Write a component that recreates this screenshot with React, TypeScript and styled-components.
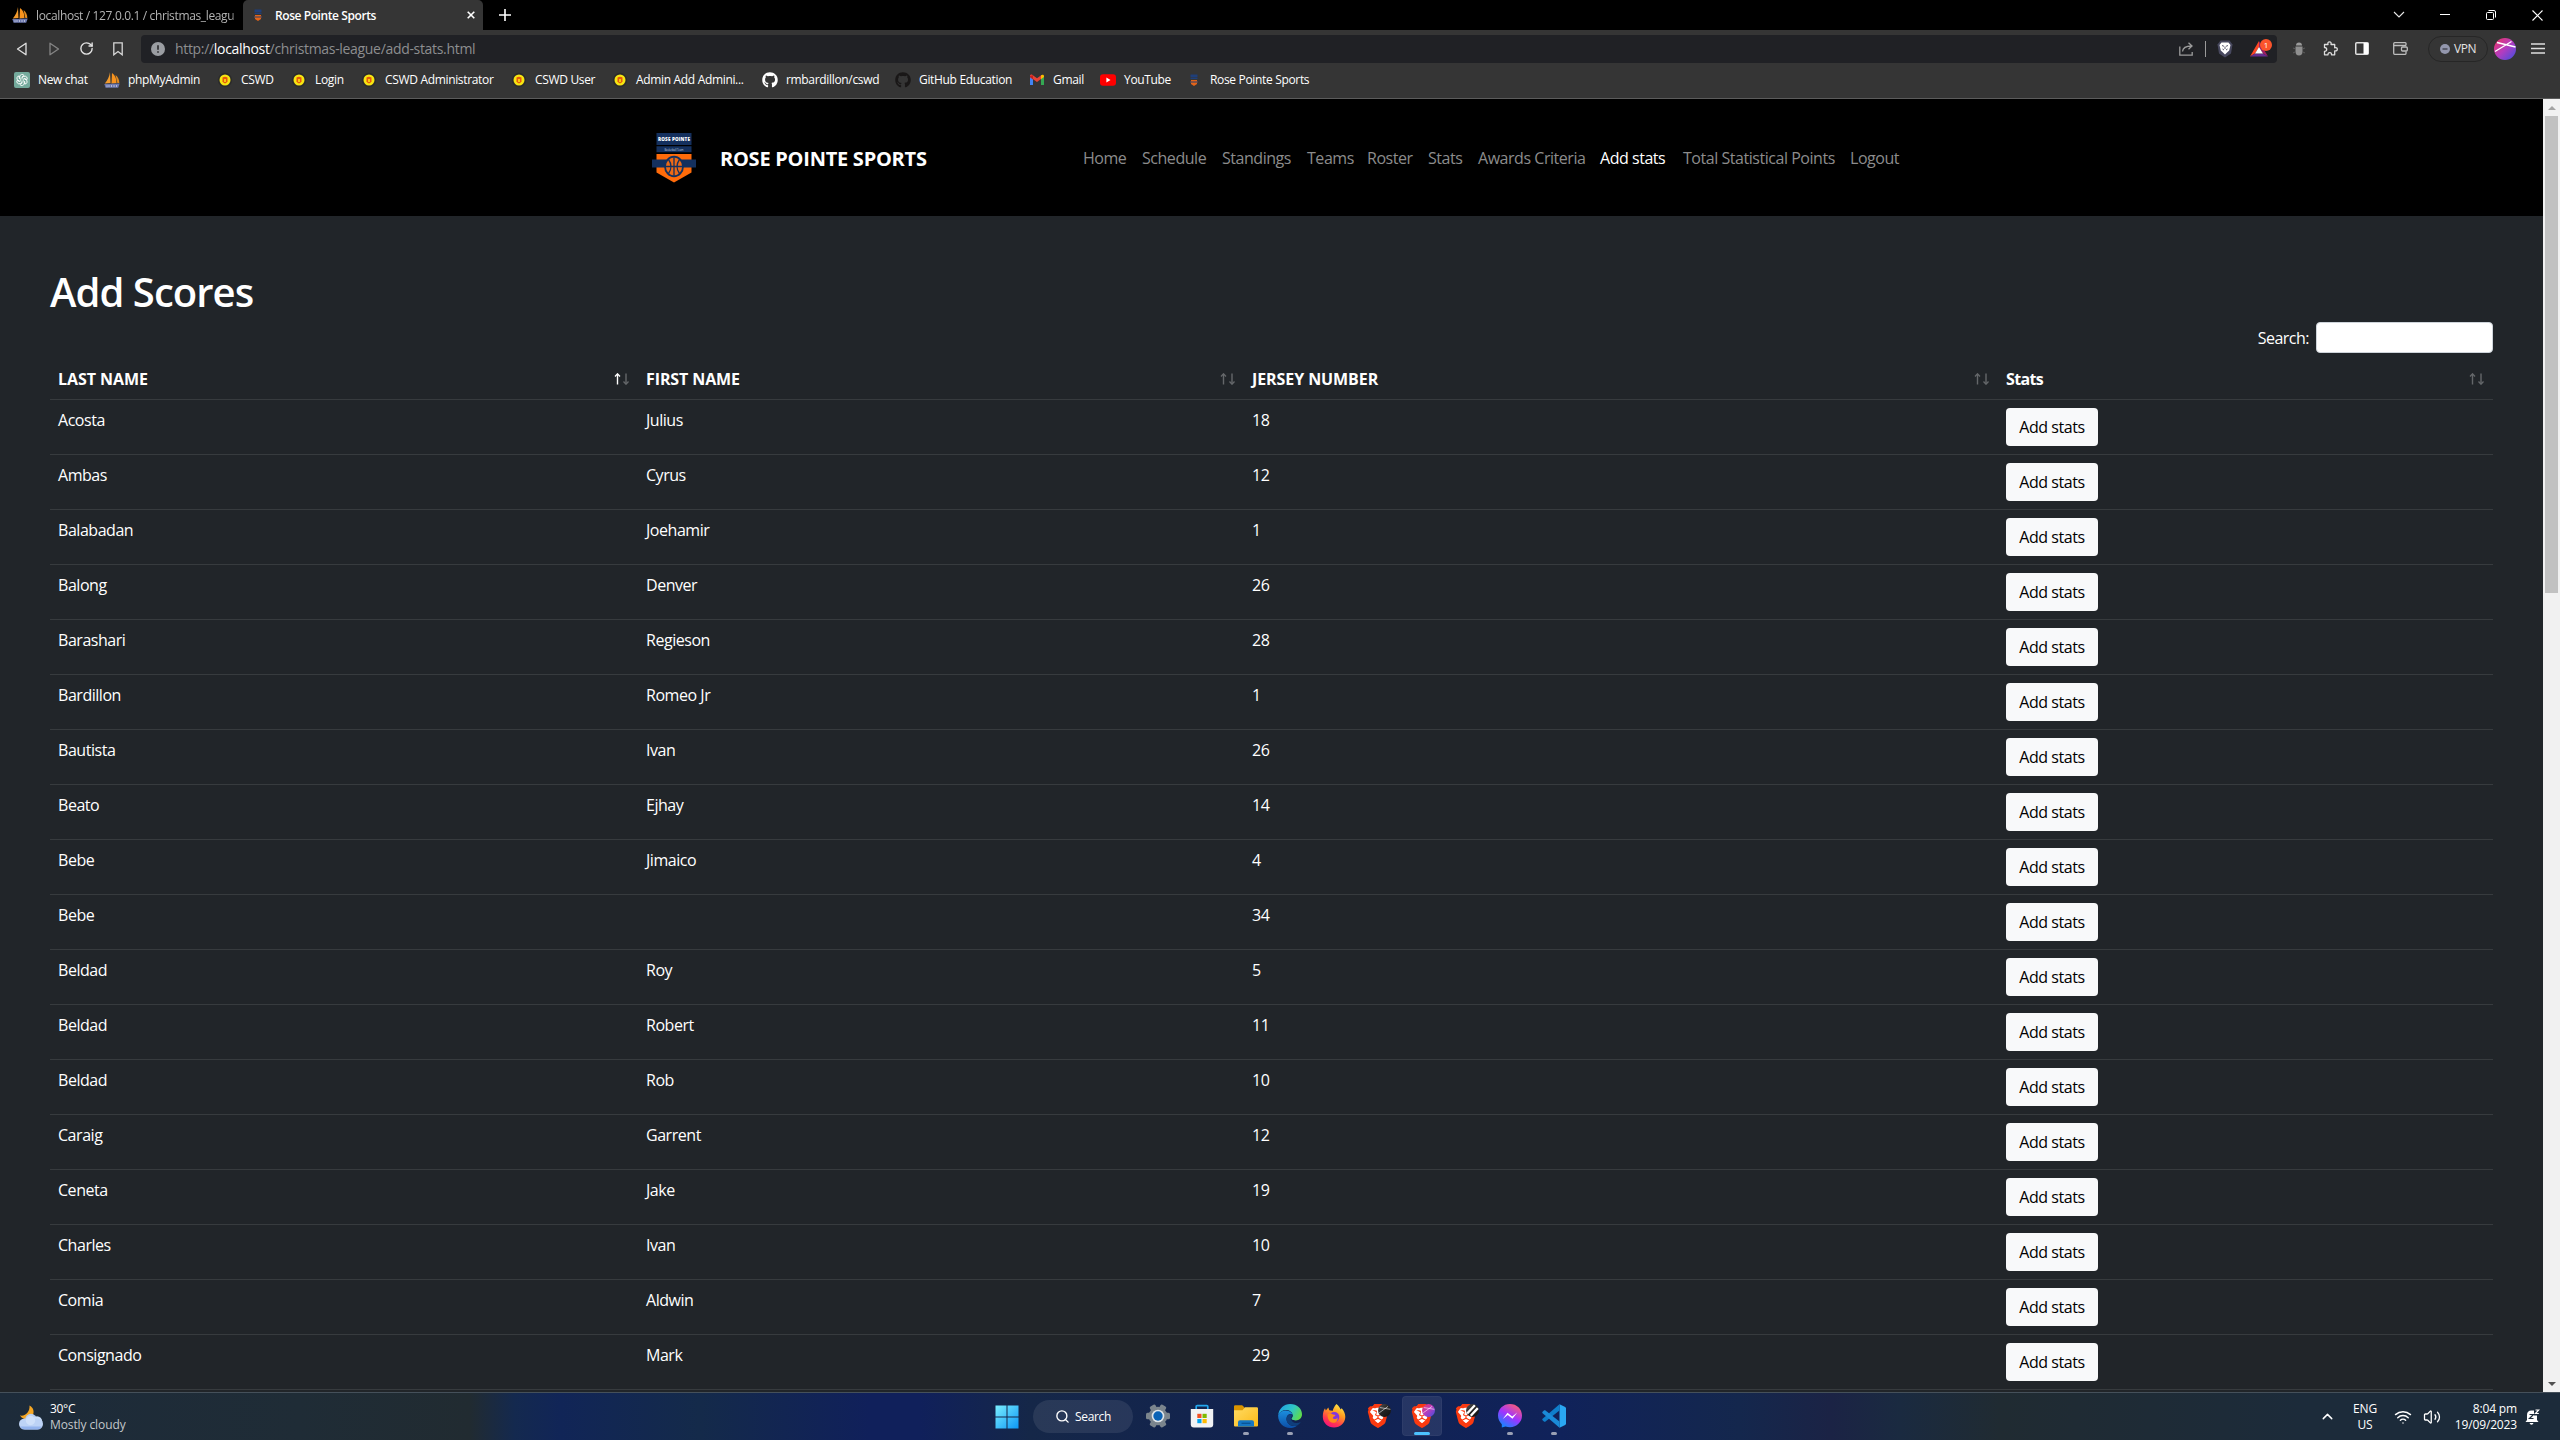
import React from "react";
import styled, { createGlobalStyle } from "styled-components";
import { Puzzle, Wallet, Search, Wifi, Volume2, RotateCw, ChevronUp } from "lucide-react";
import { FaGithub } from "react-icons/fa";
import { SiBrave } from "react-icons/si";

const Global = createGlobalStyle`
  * { box-sizing: border-box; }
  html, body { margin: 0; padding: 0; background: #212529; overflow: hidden; }
  body { font-family: "Open Sans", "Noto Sans", "Liberation Sans", sans-serif; color: #fff; }
`;

const Screen = styled.div`
  width: 2560px;
  height: 1440px;
  display: flex;
  flex-direction: column;
  overflow: hidden;
`;

/* ---------- browser chrome ---------- */

const TabStrip = styled.div`
  height: 30px;
  flex: none;
  background: #000;
  display: flex;
  font-size: 12px;
`;
const Tab = styled.div<{ $active?: boolean }>`
  width: ${(p) => (p.$active ? 240 : 243)}px;
  height: 30px;
  display: flex;
  align-items: center;
  padding: ${(p) => (p.$active ? "0 5px 0 7px" : "0 1px 0 12px")};
  background: ${(p) => (p.$active ? "#353535" : "#000")};
  border-radius: ${(p) => (p.$active ? "5px 5px 0 0" : "0")};
`;
const TabTitle = styled.span<{ $active?: boolean }>`
  flex: 1;
  margin-left: ${(p) => (p.$active ? 9 : 8)}px;
  white-space: nowrap;
  font-weight: ${(p) => (p.$active ? 600 : 400)};
  letter-spacing: ${(p) => (p.$active ? "-0.42px" : "-0.36px")};
  color: ${(p) => (p.$active ? "#fff" : "#b4b4b4")};
  ${(p) => (p.$active ? "" : "mask-image: linear-gradient(to right, #000 94%, transparent);")}
`;
const Slot = styled.span<{ $w: number }>`
  width: ${(p) => p.$w}px;
  flex: none;
  display: flex;
  align-items: center;
  justify-content: center;
`;
const Spacer = styled.div`
  flex: 1;
`;

const Toolbar = styled.div`
  height: 37px;
  flex: none;
  background: #353535;
  display: flex;
  align-items: center;
  padding: 0 6px 0 5px;
  color: #d6d6d6;
`;
const UrlBar = styled.div`
  margin-left: 7px;
  width: 2136px;
  height: 28px;
  background: #202125;
  border-radius: 4px;
  display: flex;
  align-items: center;
`;
const UrlText = styled.span`
  font-size: 14px;
  letter-spacing: -0.32px;
  color: #8d8e90;
  line-height: 28px;
  b {
    font-weight: 400;
    color: #fff;
  }
`;
const Divider = styled.i`
  width: 1px;
  height: 16px;
  margin: 0 3px;
  background: #9a9a9a;
`;
const BadgeHost = styled.span`
  position: relative;
  display: flex;
`;
const Badge = styled.span`
  position: absolute;
  left: 10px;
  top: -2px;
  width: 12px;
  height: 12px;
  border-radius: 6px;
  background: #fb542b;
  color: #fff;
  font-size: 8px;
  line-height: 12px;
  text-align: center;
`;
const Vpn = styled.div`
  margin-left: 12px;
  width: 60px;
  height: 26px;
  border: 1px solid #262626;
  border-radius: 13px;
  display: flex;
  align-items: center;
  justify-content: center;
  gap: 4px;
  font-size: 12px;
  letter-spacing: -0.45px;
  color: #e4e4e4;
`;

const Bookmarks = styled.div`
  height: 32px;
  flex: none;
  background: #353535;
  border-bottom: 1px solid #5c5c5c;
  padding: 0 0 6px 14px;
  display: flex;
  align-items: center;
  gap: 16px;
  font-size: 12px;
  letter-spacing: -0.33px;
`;
const Mark = styled.div`
  display: flex;
  align-items: center;
  gap: 8px;
`;
const MarkText = styled.span<{ $w: number }>`
  width: ${(p) => p.$w}px;
  white-space: nowrap;
  line-height: 16px;
`;

/* ---------- page ---------- */

const Viewport = styled.div`
  height: 1293px;
  flex: none;
  display: flex;
  overflow: hidden;
`;
const Page = styled.main`
  width: 2543px;
  height: 1293px;
  overflow: hidden;
  background: #212529;
`;
const Navbar = styled.nav`
  height: 117px;
  background: #000;
  display: flex;
  align-items: center;
  padding-left: 651px;
`;
const Brand = styled.span`
  margin-left: 23px;
  width: 363px;
  padding-top: 1px;
  font-size: 20px;
  font-weight: 700;
  letter-spacing: -0.25px;
`;
const NavLink = styled.a<{ $w: number; $active?: boolean }>`
  width: ${(p) => p.$w}px;
  margin-right: 16px;
  padding-top: 1px;
  white-space: nowrap;
  font-size: 16px;
  line-height: 24px;
  letter-spacing: -0.46px;
  color: ${(p) => (p.$active ? "#fff" : "#8c8c8c")};
`;
const Content = styled.section`
  padding: 52px 50px 0;
`;
const Title = styled.h1`
  margin: 0;
  font-size: 40px;
  line-height: 48px;
  font-weight: 600;
  letter-spacing: -0.95px;
`;
const Filter = styled.label`
  display: flex;
  justify-content: flex-end;
  align-items: center;
  gap: 7px;
  margin-top: 6px;
  height: 31px;
  font-size: 16px;
  letter-spacing: -0.5px;
`;
const FilterInput = styled.input`
  width: 177px;
  height: 31px;
  border: 1px solid #ced4da;
  border-radius: 4px;
  background: #fff;
`;
const Table = styled.table`
  margin-top: 6px;
  width: 2443px;
  table-layout: fixed;
  border-collapse: separate;
  border-spacing: 0;
  font-size: 16px;
  line-height: 24px;
  letter-spacing: -0.46px;
`;
const Th = styled.th<{ $w?: number }>`
  ${(p) => (p.$w ? `width: ${p.$w}px;` : "")}
  height: 41px;
  padding: 8px 7px 8px 8px;
  text-align: left;
  font-weight: 700;
  border-bottom: 1px solid #373b3e;
`;
const ThInner = styled.div<{ $ls: number }>`
  display: flex;
  align-items: center;
  justify-content: space-between;
  letter-spacing: ${(p) => p.$ls}px;
`;
const Td = styled.td`
  height: 55px;
  padding: 8px;
  vertical-align: top;
  border-bottom: 1px solid #373b3e;
`;
const AddButton = styled.button`
  display: block;
  width: 92px;
  height: 38px;
  padding: 0;
  border: 0;
  border-radius: 4px;
  background: #f8f9fa;
  color: #000;
  font-family: inherit;
  font-size: 16px;
  letter-spacing: -0.42px;
`;
const Scrollbar = styled.div`
  width: 17px;
  background: #f1f1f1;
  display: flex;
  flex-direction: column;
  align-items: center;
`;
const Arrow = styled.span<{ $up?: boolean }>`
  height: 17px;
  width: 17px;
  display: flex;
  align-items: center;
  justify-content: center;
  &::before {
    content: "";
    border: 4px solid transparent;
    border-top-width: ${(p) => (p.$up ? 0 : 4)}px;
    border-bottom-width: ${(p) => (p.$up ? 4 : 0)}px;
    ${(p) => (p.$up ? "border-bottom-color: #a3a3a3;" : "border-top-color: #505050;")}
  }
`;
const Thumb = styled.div`
  width: 13px;
  height: 477px;
  background: #c1c1c1;
  margin-bottom: auto;
`;

/* ---------- taskbar ---------- */

const Taskbar = styled.footer`
  height: 48px;
  flex: none;
  border-top: 1px solid #45505a;
  background: linear-gradient(
    to right,
    #1d2b3a 0, #1f2c36 300px, #212b31 470px, #14294f 515px, #112557 560px,
    #142a4a 700px, #10205b 870px, #10205b 920px, #152748 1030px, #12234f 1250px,
    #10225a 1560px, #14274d 1740px, #1b2345 1830px, #1a2a40 1900px, #202b32 2000px, #1c2b3a 2300px
  );
  display: flex;
  align-items: center;
  color: #fff;
`;
const Weather = styled.div`
  width: 995px;
  padding-left: 18px;
  display: flex;
  align-items: center;
  gap: 6px;
`;
const WeatherText = styled.div`
  font-size: 12px;
  line-height: 16px;
  letter-spacing: -0.3px;
  span {
    display: block;
    letter-spacing: -0.1px;
    color: #c3c7ca;
  }
`;
const SearchPill = styled.div`
  width: 100px;
  height: 33px;
  margin: 0 3px 0 14px;
  border-radius: 17px;
  background: rgba(255, 255, 255, 0.085);
  display: flex;
  align-items: center;
  justify-content: center;
  gap: 5px;
  font-size: 12px;
  letter-spacing: -0.35px;
`;
const AppSlot = styled.div`
  width: 44px;
  height: 47px;
  display: flex;
  flex-direction: column;
  align-items: center;
`;
const Tile = styled.div<{ $state?: "open" | "active" }>`
  width: 40px;
  height: 40px;
  margin-top: 3px;
  padding-top: 8px;
  border-radius: 4px;
  display: flex;
  flex-direction: column;
  align-items: center;
  background: ${(p) => (p.$state === "active" ? "rgba(255,255,255,0.09)" : "transparent")};
  box-shadow: ${(p) => (p.$state === "active" ? "inset 0 0 0 1px rgba(255,255,255,0.04)" : "none")};
  &::after {
    content: "";
    margin-top: 4px;
    height: 3px;
    border-radius: 2px;
    width: ${(p) => (p.$state === "active" ? 16 : p.$state ? 6 : 0)}px;
    background: ${(p) => (p.$state === "active" ? "#4cc2ff" : "#9aa0b4")};
  }
`;
const Tray = styled.div`
  display: flex;
  align-items: center;
  font-size: 12px;
  line-height: 16px;
  height: 47px;
`;
const TrayText = styled.div<{ $w: number; $align: string }>`
  width: ${(p) => p.$w}px;
  text-align: ${(p) => p.$align};
  letter-spacing: -0.15px;
`;
const BraveWrap = styled.span`
  display: flex;
  position: relative;
`;
const ProfileDot = styled.svg`
  position: absolute;
  right: -1px;
  top: 0;
`;

/* ---------- drawings ---------- */

const PmaIcon = () => (
  <svg width="16" height="16" viewBox="0 0 16 16">
    <path d="M6 0C5.500 4.500 3.500 8.500 .8 11.500L6.500 11Z" fill="#f29b2e" />
    <path d="M8 1c3 2 4.500 5.500 4.500 10L7.500 11.500Z" fill="#f7931e" />
    <path d="M11.500 3c2.500 2 3.800 4.500 3.800 8h-2Z" fill="#e08a20" />
    <path d="M.3 12l15.400-.5-1.500 4.200H1.600Z" fill="#6c78af" />
    <path d="M3 13.200v2M5 13v2M7.500 13v2M10 13v2M12.500 13v2" stroke="#c5c9dc" strokeWidth=".8" />
  </svg>
);
const CrestIcon = () => (
  <svg width="16" height="16" viewBox="0 0 16 16">
    <path d="M4.500 2.500h7v3h-7zM4.500 6h7v1h-7z" fill="#1f3f7a" />
    <path d="M5 8h6v4l-3 2-3-2Z" fill="#e3641a" />
    <path d="M4 9.300h8v1.400H4z" fill="#5b4a55" />
  </svg>
);
const SealIcon = () => (
  <svg width="16" height="16" viewBox="0 0 16 16">
    <circle cx="8" cy="8" r="7.200" fill="#2b2b2b" />
    <circle cx="8" cy="8" r="5.500" fill="#f6e511" />
    <path d="M5.500 5.600q2.500-1.800 5 0v3.600q-.4 1.600-2.500 2.200-2.100-.6-2.500-2.200Z" fill="#e8590c" />
    <path d="M7 7h2v3H7z" fill="#f6c90e" />
  </svg>
);
const ChatIcon = () => (
  <svg width="16" height="16" viewBox="0 0 16 16">
    <rect width="16" height="16" rx="2" fill="#74aa9c" />
    <g fill="none" stroke="#fff" strokeWidth=".85">
      {[0, 60, 120, 180, 240, 300].map((a) => (
        <path key={a} transform={`rotate(${a} 8 8)`} d="M5.800 6.800V4.700a2.300 2.300 0 0 1 4.300-1.100L8 4.900v2.200" />
      ))}
    </g>
  </svg>
);
const GmailIcon = () => (
  <svg width="16" height="16" viewBox="0 0 16 16">
    <path d="M1 4v9h3V7Z" fill="#4285f4" />
    <path d="M12 7v6h3V4Z" fill="#34a853" />
    <path d="M1 4.500V4c0-1.500 1.500-1.900 2.500-1.100L8 6.300l4.500-3.400L12 7 8 10 1 5Z" fill="#ea4335" />
    <path d="M12 3.300c1.200-1 3-.6 3 .9v.8l-3 2.300Z" fill="#fbbc04" />
    <path d="M1 4v1.200l3 2.200V3.300Z" fill="#c5221f" />
  </svg>
);
const YoutubeIcon = () => (
  <svg width="16" height="16" viewBox="0 0 16 16">
    <rect y="2.300" width="16" height="11.400" rx="3" fill="#f00" />
    <path d="M6.400 5.600v4.800L10.500 8Z" fill="#fff" />
  </svg>
);

const TeamLogo = () => (
  <svg width="46" height="50" viewBox="0 0 46 50">
    <path d="M5.500 0h35v12h-35zM5.500 13.300h35v6h-35z" fill="#14305e" />
    <text x="23" y="8.100" fill="#fff" fontSize="4.600" fontWeight="800" textAnchor="middle" textLength="32">ROSE POINTE</text>
    <text x="23" y="17.500" fill="#b9c4d8" fontSize="2.600" textAnchor="middle" textLength="19">Basketball Team</text>
    <path d="M5.500 21h35v18.500L23 49.500 5.500 39.500Z" fill="#ff6b0a" />
    <path d="M1 26.500h44v8H1z" fill="#14305e" />
    <ellipse cx="23" cy="33.500" rx="9" ry="9.800" fill="#ee6a16" stroke="#14305e" strokeWidth="1.800" />
    <path d="M23 24v19M14 33.500h18M17.500 26.500q5 7 0 14M28.500 26.500q-5 7 0 14" fill="none" stroke="#14305e" strokeWidth="1.300" />
  </svg>
);

const SortArrows = ({ sorted }: { sorted?: boolean }) => (
  <svg width="18" height="12" viewBox="0 0 18 12" fill="none" stroke="#fff">
    <g opacity={sorted ? 1 : 0.3}>
      <path d="M4.500 11.500V1" strokeWidth="1.400" />
      <path d="M2 3.500L4.500.8 7 3.500" strokeWidth="1.300" />
    </g>
    <g opacity=".3">
      <path d="M13 .5V11" strokeWidth="1.400" />
      <path d="M10.500 8.500l2.500 2.700 2.500-2.700" strokeWidth="1.300" />
    </g>
  </svg>
);

const profileGradient = (id: string, dark?: boolean) => (
  <linearGradient id={id} x1="0" y1="0" x2="1" y2="1">
    <stop offset="0" stopColor={dark ? "#555" : "#f0355f"} />
    <stop offset=".5" stopColor={dark ? "#222" : "#b43cc0"} />
    <stop offset="1" stopColor={dark ? "#111" : "#3b50e0"} />
  </linearGradient>
);

const Avatar = () => (
  <svg width="22" height="22" viewBox="0 0 22 22">
    <defs>{profileGradient("av")}</defs>
    <circle cx="11" cy="11" r="11" fill="url(#av)" />
    <path d="M3 4.500L21.500 9M1 13.500L17.500 3.500" stroke="#fff" strokeWidth="1.300" />
  </svg>
);

const BraveIcon = ({ kind }: { kind: "dark" | "pink" | "stripe" }) => (
  <BraveWrap>
    <svg width="24" height="24" viewBox="0 0 24 24">
      <path d="M7 2h10l4 5-2.500 10L12 22l-6.500-5L3 7Z" fill="#fff" />
      <SiBrave size={24} color="#fa3a10" />
    </svg>
    <ProfileDot width="13" height="13" viewBox="0 0 22 22">
      <defs>{profileGradient("bd" + kind, kind !== "pink")}</defs>
      <circle cx="11" cy="11" r="11" fill={`url(#bd${kind})`} />
      {kind === "stripe" ? (
        <path d="M2 16L15 2M8 20L20 7" stroke="#fff" strokeWidth="4" />
      ) : (
        <path d="M3 6l18 3M2 15L17 4" stroke="#fff" strokeOpacity=".75" strokeWidth="1.300" />
      )}
    </ProfileDot>
  </BraveWrap>
);

const StartIcon = () => (
  <svg width="24" height="24" viewBox="0 0 24 24">
    <defs>
      <linearGradient id="win" gradientUnits="userSpaceOnUse" x1="0" y1="0" x2="24" y2="24">
        <stop offset="0" stopColor="#7df0ff" />
        <stop offset="1" stopColor="#0a95f5" />
      </linearGradient>
    </defs>
    <path d="M.5.500H11.500V11.500H.5ZM12.500.500H23.500V11.500H12.500ZM.5 12.500H11.500V23.500H.5ZM12.500 12.500H23.500V23.500H12.500Z" fill="url(#win)" />
  </svg>
);
const SettingsIcon = () => (
  <svg width="24" height="24" viewBox="0 0 24 24">
    <g fill="#7b858d">
      {[0, 60, 120].map((a) => (
        <rect key={a} x="8.800" y="0" width="6.400" height="24" rx="1.500" transform={`rotate(${a + 30} 12 12)`} />
      ))}
      <circle cx="12" cy="12" r="9.300" />
    </g>
    <circle cx="12" cy="12" r="6.300" fill="#dfe5ea" />
    <circle cx="12" cy="12" r="4.700" fill="#0b63b5" />
  </svg>
);
const StoreIcon = () => (
  <svg width="24" height="24" viewBox="0 0 24 24">
    <path d="M6.200 6V2.600q0-1 1-1h9.600q1 0 1 1V6" fill="none" stroke="#23a8ee" strokeWidth="1.700" />
    <path d="M.8 5h22.400v15.500q0 3-3 3H3.800q-3 0-3-3Z" fill="#f1f2f4" />
    <path d="M7.300 9.800h4.200V14H7.300z" fill="#f25022" />
    <path d="M12.500 9.800h4.200V14h-4.200z" fill="#7fba00" />
    <path d="M7.300 15h4.200v4.200H7.300z" fill="#00a4ef" />
    <path d="M12.500 15h4.200v4.200h-4.200z" fill="#ffb900" />
  </svg>
);
const FolderIcon = () => (
  <svg width="24" height="24" viewBox="0 0 24 24">
    <defs>
      <linearGradient id="fo" x1="0" y1="0" x2="1" y2="1">
        <stop offset="0" stopColor="#ffdb63" />
        <stop offset="1" stopColor="#fbb917" />
      </linearGradient>
    </defs>
    <path d="M0 2.500q0-1.200 1.200-1.200h7l2.300 2.200V8H0Z" fill="#d99400" />
    <path d="M0 6.200h8.500L11 3.300h11.800q1.200 0 1.200 1.200v17q0 1-1 1H1q-1 0-1-1Z" fill="url(#fo)" />
    <path d="M4 22.500v-4.300q0-2 2-2h12q2 0 2 2v4.300Z" fill="#1577c4" />
    <path d="M7.500 19.300h9" stroke="#0a5495" strokeWidth="1.300" />
  </svg>
);
const EdgeIcon = () => (
  <svg width="24" height="24" viewBox="0 0 24 24">
    <defs>
      <linearGradient id="eg" x1="0" y1=".2" x2="1" y2=".6">
        <stop offset="0" stopColor="#1f9fe6" />
        <stop offset=".55" stopColor="#2fc6c6" />
        <stop offset="1" stopColor="#5fdc4b" />
      </linearGradient>
      <linearGradient id="eb" x1="0" y1="0" x2="0" y2="1">
        <stop offset="0" stopColor="#1b8fdf" />
        <stop offset="1" stopColor="#0c4ea6" />
      </linearGradient>
    </defs>
    <path d="M.2 11C1 4.500 6 0 12.200 0 19 0 24 4.600 24 10.200c0 3.900-3 6.200-6.200 6.200-3.600 0-4.700-1.500-4-2.400 1-1.200 1.200-1.800 1-3C14.200 8 11.500 6 8 6 4.500 6 1.500 8 .2 11Z" fill="url(#eg)" />
    <path d="M.2 11C1.500 8 4.500 6.500 7.500 6.500c3.800 0 6.500 1.800 7.200 4.200C12 8.500 8 11 8.500 15.500c.5 4.500 5 8 10.700 5.900C17 23.200 14.500 24 12 24 5 24-.4 18 .2 11Z" fill="url(#eb)" />
    <path d="M8.500 15c-.2 4.500 5 8.500 10.700 6.400 1.500-.8 2.800-2 3.500-3.400-4 2-9.200 1-9.900-3.500.3-1.200 1.500-2 1-3.800-2-1.200-5.100 1-5.300 4.300Z" fill="#103f7c" />
  </svg>
);
const FirefoxIcon = () => (
  <svg width="24" height="24" viewBox="0 0 24 24">
    <defs>
      <linearGradient id="ff" x1=".8" y1="0" x2=".3" y2="1">
        <stop offset="0" stopColor="#fff04a" />
        <stop offset=".4" stopColor="#ff9a1f" />
        <stop offset=".75" stopColor="#ff3750" />
        <stop offset="1" stopColor="#f3117e" />
      </linearGradient>
    </defs>
    <path d="M14.500 0c2.500 2 3.500 4 4 5.500l1.200-1.200C22 7 23.400 10 23.300 13c-.2 6-5 10.500-11.200 10.500C5.800 23.500.8 19 .8 12.800.8 9.500 1.500 6 3 4.200l.8 2.200L6.300 3.600l1 2.700C9 6.500 9.500 6.800 10.500 7c1-3 2-5 4-7Z" fill="url(#ff)" />
    <circle cx="12.300" cy="13" r="5" fill="#8436dd" />
    <path d="M5.500 10.500c2-1.500 4-1.200 5.500 0l2.500.5c-.5 1.500-2.500 1.500-2.700 3 .7 1.600 3.700 1.500 4.700-.5.500 3-1.500 5.500-4.500 5.300-3.500-.3-5.500-4-5.500-8.300Z" fill="#ff8a1c" />
  </svg>
);
const MessengerIcon = () => (
  <svg width="24" height="24" viewBox="0 0 24 24">
    <defs>
      <linearGradient id="ms" x1=".2" y1="1" x2=".8" y2="0">
        <stop offset="0" stopColor="#0a8cff" />
        <stop offset=".5" stopColor="#a033ff" />
        <stop offset="1" stopColor="#ff6070" />
      </linearGradient>
    </defs>
    <path d="M12 0C5.300 0 0 4.900 0 11.600c0 3.500 1.400 6.500 3.800 8.600v3.400l3.700-1.100c1.400.5 2.900.7 4.500.7 6.700 0 12-4.900 12-11.600S18.700 0 12 0Z" fill="url(#ms)" />
    <path d="M4.800 15l4.700-6.200 4.700 3.600 5-3.900-4.700 6.200-4.700-3.600Z" fill="#fff" />
  </svg>
);
const CodeIcon = () => (
  <svg width="24" height="24" viewBox="0 0 24 24">
    <path d="M17.500.3L23.200 3 24 4v16l-.8 1-5.700 2.700Z" fill="#2aa7f2" />
    <path d="M17.500.3V6.500L3.200 17.800l-1-.1L.3 16v-1Z" fill="#0f7ecb" />
    <path d="M17.500 23.700V17.500L3.200 6.200l-1 .1L.3 8v1Z" fill="#1a8ad8" />
  </svg>
);
const WeatherIcon = () => (
  <svg width="26" height="32" viewBox="0 0 26 32">
    <path d="M11.500 4.500c4.500 2 5.500 8 2 11.500S5 19 2 14.500C8 15.500 12 10.500 11.500 4.500Z" fill="#f5a623" />
    <circle cx="13" cy="18.500" r="5.800" fill="#b9cff3" />
    <circle cx="19" cy="20.500" r="5.200" fill="#c9dcf8" />
    <rect x="1" y="17.500" width="24" height="11" rx="5.500" fill="#bdd3f6" />
    <circle cx="12.500" cy="19.500" r="4.700" fill="#cfe0fa" />
    <path d="M2.200 25.500q1.800 3 5 3h12q3 0 4.600-3Z" fill="#94b4ee" />
  </svg>
);

/* ---------- data ---------- */

const marks: { icon: React.ReactNode; text: string; w: number }[] = [
  { icon: <ChatIcon />, text: "New chat", w: 50 },
  { icon: <PmaIcon />, text: "phpMyAdmin", w: 73 },
  { icon: <SealIcon />, text: "CSWD", w: 34 },
  { icon: <SealIcon />, text: "Login", w: 30 },
  { icon: <SealIcon />, text: "CSWD Administrator", w: 110 },
  { icon: <SealIcon />, text: "CSWD User", w: 61 },
  { icon: <SealIcon />, text: "Admin Add Admini...", w: 110 },
  { icon: <FaGithub size={16} color="#fff" />, text: "rmbardillon/cswd", w: 93 },
  { icon: <FaGithub size={16} color="#191717" />, text: "GitHub Education", w: 94 },
  { icon: <GmailIcon />, text: "Gmail", w: 31 },
  { icon: <YoutubeIcon />, text: "YouTube", w: 46 },
  { icon: <CrestIcon />, text: "Rose Pointe Sports", w: 100 },
];

const links: [string, number][] = [
  ["Home", 43],
  ["Schedule", 64],
  ["Standings", 69],
  ["Teams", 44],
  ["Roster", 45],
  ["Stats", 34],
  ["Awards Criteria", 106],
  ["Add stats", 67],
  ["Total Statistical Points", 151],
  ["Logout", 50],
];

const players: [string, string, string][] = [
  ["Acosta", "Julius", "18"],
  ["Ambas", "Cyrus", "12"],
  ["Balabadan", "Joehamir", "1"],
  ["Balong", "Denver", "26"],
  ["Barashari", "Regieson", "28"],
  ["Bardillon", "Romeo Jr", "1"],
  ["Bautista", "Ivan", "26"],
  ["Beato", "Ejhay", "14"],
  ["Bebe", "Jimaico", "4"],
  ["Bebe", "", "34"],
  ["Beldad", "Roy", "5"],
  ["Beldad", "Robert", "11"],
  ["Beldad", "Rob", "10"],
  ["Caraig", "Garrent", "12"],
  ["Ceneta", "Jake", "19"],
  ["Charles", "Ivan", "10"],
  ["Comia", "Aldwin", "7"],
  ["Consignado", "Mark", "29"],
];

const headers: { text: string; w?: number; ls: number }[] = [
  { text: "LAST NAME", w: 588, ls: -0.05 },
  { text: "FIRST NAME", w: 606, ls: -0.1 },
  { text: "JERSEY NUMBER", w: 754, ls: -0.08 },
  { text: "Stats", ls: -0.65 },
];

const apps: { icon: React.ReactNode; state?: "open" | "active" }[] = [
  { icon: <SettingsIcon /> },
  { icon: <StoreIcon /> },
  { icon: <FolderIcon />, state: "open" },
  { icon: <EdgeIcon />, state: "open" },
  { icon: <FirefoxIcon /> },
  { icon: <BraveIcon kind="dark" /> },
  { icon: <BraveIcon kind="pink" />, state: "active" },
  { icon: <BraveIcon kind="stripe" /> },
  { icon: <MessengerIcon />, state: "open" },
  { icon: <CodeIcon />, state: "open" },
];

/* ---------- sections ---------- */

const TabBar = () => (
  <TabStrip>
    <Tab>
      <PmaIcon />
      <TabTitle>localhost / 127.0.0.1 / christmas_leagu</TabTitle>
    </Tab>
    <Tab $active>
      <CrestIcon />
      <TabTitle $active>Rose Pointe Sports</TabTitle>
      <Slot $w={15}>
        <svg width="8" height="8" viewBox="0 0 8 8">
          <path d="M.7.700l6.600 6.600M7.300.700L.7 7.300" stroke="#fff" strokeWidth="1.600" />
        </svg>
      </Slot>
    </Tab>
    <Slot $w={44}>
      <svg width="12" height="12" viewBox="0 0 12 12">
        <path d="M6 0v12M0 6h12" stroke="#fff" strokeWidth="1.600" />
      </svg>
    </Slot>
    <Spacer />
    <Slot $w={46}>
      <svg width="12" height="8" viewBox="0 0 12 8" fill="none" stroke="#e8e8e8" strokeWidth="1.100">
        <path d="M1 1l5 5 5-5" />
      </svg>
    </Slot>
    <Slot $w={46}>
      <svg width="10" height="2" viewBox="0 0 10 2">
        <path d="M0 .5h10" stroke="#fff" />
      </svg>
    </Slot>
    <Slot $w={46}>
      <svg width="10" height="10" viewBox="0 0 10 10" fill="none" stroke="#fff">
        <rect x=".5" y="2.500" width="7" height="7" rx="1" />
        <path d="M2.500.500H8q1.500 0 1.500 1.500v5.500" />
      </svg>
    </Slot>
    <Slot $w={46}>
      <svg width="11" height="11" viewBox="0 0 11 11">
        <path d="M.5.500l10 10M10.500.500l-10 10" stroke="#fff" strokeWidth="1.100" />
      </svg>
    </Slot>
  </TabStrip>
);

const AddressBar = () => (
  <Toolbar>
    <Slot $w={33}>
      <svg width="12" height="14" viewBox="0 0 12 14" fill="none" stroke="#e0e0e0" strokeWidth="1.300" strokeLinejoin="round">
        <path d="M10 1.200v11.600L1.500 7Z" />
      </svg>
    </Slot>
    <Slot $w={32}>
      <svg width="12" height="14" viewBox="0 0 12 14" fill="none" stroke="#858585" strokeWidth="1.300" strokeLinejoin="round">
        <path d="M2 1.200v11.600L10.500 7Z" />
      </svg>
    </Slot>
    <Slot $w={32}>
      <RotateCw size={15} strokeWidth={2.2} color="#e4e4e4" />
    </Slot>
    <Slot $w={32}>
      <svg width="10" height="14" viewBox="0 0 10 14" fill="none" stroke="#d8d8d8" strokeWidth="1.300">
        <path d="M.8.800h8.400v12L5 9.600.8 12.800Z" />
      </svg>
    </Slot>
    <UrlBar>
      <Slot $w={34}>
        <svg width="14" height="14" viewBox="0 0 14 14">
          <circle cx="7" cy="7" r="7" fill="#9a9da2" />
          <path d="M7 3.200v4.600M7 9.200v1.600" stroke="#202125" strokeWidth="1.500" />
        </svg>
      </Slot>
      <UrlText>
        http://<b>localhost</b>/christmas-league/add-stats.html
      </UrlText>
      <Spacer />
      <Slot $w={32}>
        <svg width="14" height="14" viewBox="0 0 14 14" fill="none" stroke="#9c9c9c" strokeWidth="1.300">
          <path d="M.8 4.500v8.700h12.400V10M3.500 9.500Q4 4 12.500 4M9.500.8L13 4 9.500 7.200" />
        </svg>
      </Slot>
      <Divider />
      <Slot $w={32}>
        <svg width="16" height="18" viewBox="0 0 16 18">
          <path d="M3.500.500h9l3 4-1.500 9L8 17.500 2 13.500.5 4.500Z" fill="#47485e" />
          <path d="M4.500 2.500h7L13.500 5l-1.300 5.500L9.500 13 8 14.500 6.500 13 3.800 10.500 2.500 5Z" fill="#fff" />
          <path d="M5 5.500l2 .8M11 5.500l-2 .8M5.500 9l1.500 1M10.500 9L9 10M8 6.500V9" stroke="#47485e" strokeWidth=".9" />
        </svg>
      </Slot>
      <Slot $w={36}>
        <BadgeHost>
          <svg width="18" height="16" viewBox="0 0 18 16">
            <path d="M9 0L0 15.500 5 12.500 9 6Z" fill="#ff4724" />
            <path d="M9 0l9 15.500-5-3L9 6Z" fill="#9e1f63" />
            <path d="M0 15.500h18l-5-3H5Z" fill="#662d91" />
            <path d="M9 6l4 6.500H5Z" fill="#fff" />
          </svg>
          <Badge>1</Badge>
        </BadgeHost>
      </Slot>
    </UrlBar>
    <Slot $w={43}>
      <svg width="12" height="14" viewBox="0 0 12 14">
        <path d="M3 3.500q0-3 3-3t3 3Z" fill="#9b9b9b" />
        <path d="M2.500 4.500h7v5q0 4-3.500 4t-3.500-4Z" fill="#8f8f8f" />
        <path d="M0 6l2 .8M12 6l-2 .8M0 11l2-1M12 11l-2-1" stroke="#5c5c5c" />
      </svg>
    </Slot>
    <Slot $w={20}>
      <svg width="15" height="15" viewBox="0 0 15 15" fill="none" stroke="#dedede" strokeWidth="1.300" strokeLinejoin="round">
        <path d="M1.500 3.500H5q-.6-2.700 1.500-2.700T8 3.500h3.700V6.800q2.600-.5 2.600 1.500t-2.600 1.500v4H8.500q.2-2.200-1.700-2.200T5 13.800H1.500V10.300q2.200-.1 2.200-1.900T1.500 6.500Z" />
      </svg>
    </Slot>
    <Slot $w={44}>
      <svg width="14" height="13" viewBox="0 0 14 13">
        <rect x=".75" y=".75" width="12.500" height="11.500" rx="1" fill="none" stroke="#e0e0e0" strokeWidth="1.500" />
        <path d="M8.500 1H13v11H8.500Z" fill="#fff" />
      </svg>
    </Slot>
    <Slot $w={32}>
      <svg width="15" height="13" viewBox="0 0 15 13" fill="none" stroke="#bdbdbd" strokeWidth="1.300">
        <path d="M13 3.500V1.500q0-.8-.8-.8H1.700q-1 0-1 1v9.600q0 1 1 1h10.500q.8 0 .8-.8V9.500M1 3.500h12" />
        <rect x="8.500" y="5" width="5.800" height="4" rx="1" />
      </svg>
    </Slot>
    <Vpn>
      <svg width="10" height="10" viewBox="0 0 10 10">
        <circle cx="5" cy="5" r="5" fill="#9397ad" />
        <path d="M2.500 5h5" stroke="#3a3b46" strokeWidth="1.300" />
      </svg>
      VPN
    </Vpn>
    <Slot $w={34}>
      <Avatar />
    </Slot>
    <Slot $w={32}>
      <svg width="14" height="11" viewBox="0 0 14 11">
        <path d="M0 1h14M0 5.500h14M0 10h14" stroke="#dedede" strokeWidth="1.400" />
      </svg>
    </Slot>
  </Toolbar>
);

const SystemBar = () => (
  <Taskbar>
    <Weather>
      <WeatherIcon />
      <WeatherText>
        30°C
        <span>Mostly cloudy</span>
      </WeatherText>
    </Weather>
    <Slot $w={24}>
      <StartIcon />
    </Slot>
    <SearchPill>
      <Search size={15} strokeWidth={2.2} />
      Search
    </SearchPill>
    {apps.map((a, i) => (
      <AppSlot key={i}>
        <Tile $state={a.state}>{a.icon}</Tile>
      </AppSlot>
    ))}
    <Spacer />
    <Tray>
      <Slot $w={40}>
        <ChevronUp size={17} strokeWidth={2} />
      </Slot>
      <TrayText $w={36} $align="center">
        ENG
        <br />
        US
      </TrayText>
      <Slot $w={40}>
        <Wifi size={18} strokeWidth={1.9} />
      </Slot>
      <Slot $w={18}>
        <Volume2 size={18} strokeWidth={1.7} />
      </Slot>
      <TrayText $w={76} $align="right">
        8:04 pm
        <br />
        19/09/2023
      </TrayText>
      <Slot $w={31}>
        <svg width="15" height="16" viewBox="0 0 15 16">
          <path d="M2 11V6Q2 1.500 6.500 1.500H9v5h3V11l1.500 2H.5Z" fill="#fff" />
          <path d="M4.500 14h4q-.5 1.800-2 1.800t-2-1.800Z" fill="#fff" />
          <path d="M4.500 5.500h4l-4 4h4" fill="none" stroke="#1c2b3a" strokeWidth="1.200" />
          <path d="M10.500 1h3.300l-3.300 3.500h3.300" fill="none" stroke="#fff" strokeWidth="1.200" />
        </svg>
      </Slot>
      <Slot $w={12} />
    </Tray>
  </Taskbar>
);

export default function App() {
  return (
    <Screen>
      <Global />
      <TabBar />
      <AddressBar />
      <Bookmarks>
        {marks.map((m) => (
          <Mark key={m.text}>
            {m.icon}
            <MarkText $w={m.w}>{m.text}</MarkText>
          </Mark>
        ))}
      </Bookmarks>
      <Viewport>
        <Page>
          <Navbar>
            <TeamLogo />
            <Brand>ROSE POINTE SPORTS</Brand>
            {links.map(([text, w]) => (
              <NavLink key={text} $w={w} $active={text === "Add stats"}>
                {text}
              </NavLink>
            ))}
          </Navbar>
          <Content>
            <Title>Add Scores</Title>
            <Filter>
              Search:
              <FilterInput />
            </Filter>
            <Table>
              <thead>
                <tr>
                  {headers.map((h, i) => (
                    <Th key={h.text} $w={h.w}>
                      <ThInner $ls={h.ls}>
                        {h.text}
                        <SortArrows sorted={i === 0} />
                      </ThInner>
                    </Th>
                  ))}
                </tr>
              </thead>
              <tbody>
                {players.map(([last, first, num], i) => (
                  <tr key={i}>
                    <Td>{last}</Td>
                    <Td>{first}</Td>
                    <Td>{num}</Td>
                    <Td>
                      <AddButton>Add stats</AddButton>
                    </Td>
                  </tr>
                ))}
              </tbody>
            </Table>
          </Content>
        </Page>
        <Scrollbar>
          <Arrow $up />
          <Thumb />
          <Arrow />
        </Scrollbar>
      </Viewport>
      <SystemBar />
    </Screen>
  );
}
